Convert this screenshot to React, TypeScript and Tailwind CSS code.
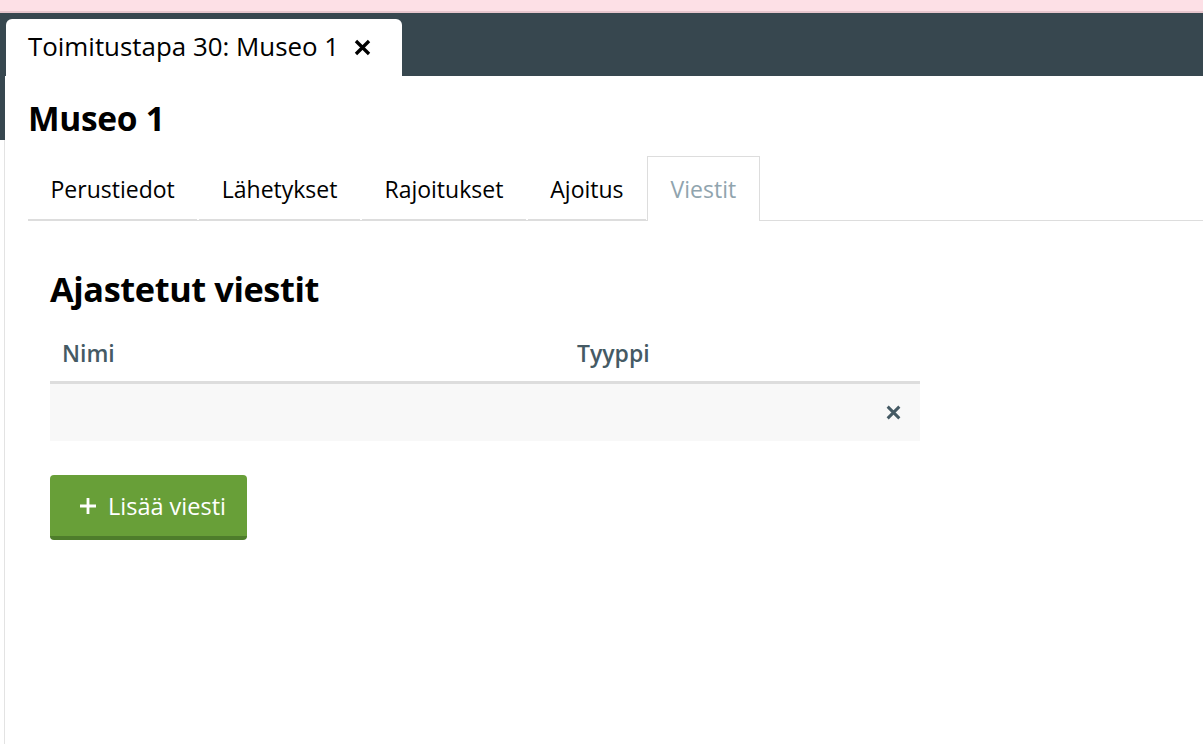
import React from "react";

const XIcon = ({ className, w = 2.6 }: { className?: string; w?: number }) => (
  <svg viewBox="0 0 16 16" className={className} fill="none" stroke="currentColor" strokeWidth={w} strokeLinecap="butt">
    <path d="M2.5 2.5 L13.5 13.5 M13.5 2.5 L2.5 13.5" />
  </svg>
);

const tabs = ["Perustiedot", "Lähetykset", "Rajoitukset", "Ajoitus"];

export default function App() {
  return (
    <div className="w-[1203px] h-[744px] overflow-hidden bg-white flex flex-col font-['Open_Sans',sans-serif] text-black">
      <div className="h-[11px] bg-[#fde0e6] shrink-0" />
      <div className="h-[2px] bg-[#e6c6cd] shrink-0" />
      <div className="h-[63px] bg-[#37474f] shrink-0 flex items-end pl-[6px]">
        <div className="w-[396px] h-[57px] bg-white rounded-t-[6px] flex items-center pl-[22px] pb-[1px]">
          <span className="text-[25.9px] leading-none">Toimitustapa 30: Museo 1</span>
          <XIcon className="w-[19px] h-[19px] ml-[14px] text-black" w={2.8} />
        </div>
      </div>
      <div className="flex flex-1">
        <div className="w-[5px] flex flex-col shrink-0">
          <div className="h-[64px] bg-[#37474f]" />
          <div className="flex-1 border-r border-[#e3e3e3]" />
        </div>
        <div className="flex-1 pl-[23px]">
          <h1 className="text-[33.5px] font-bold leading-none mt-[26px] tracking-[-0.3px]">Museo 1</h1>
          <div className="mt-[20px] flex items-end border-b border-[#dddddd] h-[65px]">
            {tabs.map((t) => (
              <div key={t} className="h-[64px] mr-[2px] px-[22.5px] pt-[3px] flex items-center border-b-2 border-[#dddddd] -mb-px text-[23px]">
                {t}
              </div>
            ))}
            <div className="h-[65px] px-[22.5px] pt-[2px] flex items-center border border-b-0 border-[#dddddd] bg-white -mb-px text-[23px] text-[#90a4ae] ml-[-1px]">
              Viestit
            </div>
          </div>
          <div className="pl-[22px]">
            <h2 className="text-[34.3px] font-bold leading-none mt-[51px] tracking-[-0.4px]">Ajastetut viestit</h2>
            <div className="w-[870px] mt-[20px]">
              <div className="h-[58px] flex items-center border-b-[3px] border-[#dddddd] text-[23px] font-semibold text-[#455a64]">
                <div className="w-[515px] pl-[12px]">Nimi</div>
                <div className="pl-[12px]">Tyyppi</div>
              </div>
              <div className="h-[57px] bg-[#f8f8f8] flex items-center justify-end pr-[18px]">
                <XIcon className="w-[17px] h-[17px] text-[#455a64]" w={2.8} />
              </div>
            </div>
            <button className="mt-[34px] w-[197px] h-[65px] rounded-[4px] bg-[#689f38] border-b-[4px] border-[#4e7d2b] flex items-center pl-[29px] pt-[2px] text-white text-[23.5px]">
              <svg viewBox="0 0 18 18" className="w-[18px] h-[18px] mr-[11px]" stroke="currentColor" strokeWidth={2.8}>
                <path d="M9 1 V17 M1 9 H17" />
              </svg>
              Lisää viesti
            </button>
          </div>
        </div>
      </div>
    </div>
  );
}
